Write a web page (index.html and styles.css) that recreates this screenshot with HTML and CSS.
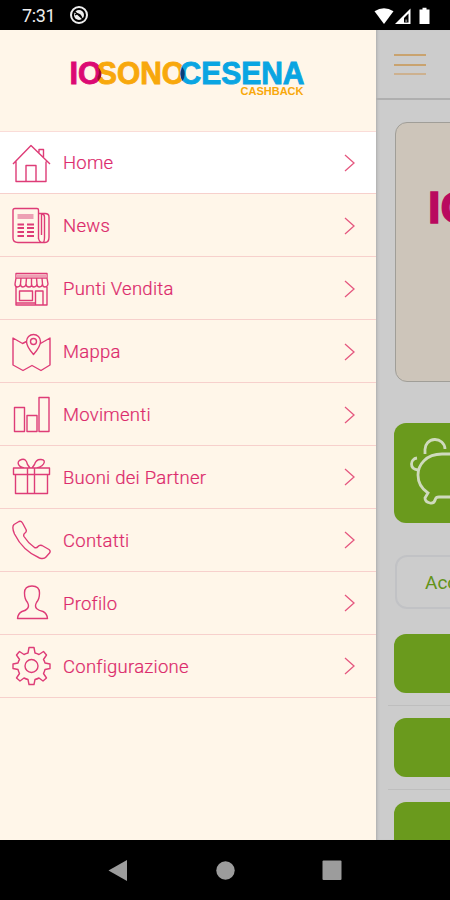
FILE: index.html
```
<!DOCTYPE html>
<html lang="it">
<head>
<meta charset="utf-8">
<title>IoSonoCesena Cashback</title>
<link rel="stylesheet" href="styles.css">
</head>
<body>
<div class="phone">
  <header class="status">
    <span class="time">7:31</span>
    <svg class="app-mark" width="20" height="20" viewBox="0 0 20 20"><circle cx="10" cy="10" r="8" fill="none" stroke="#eee" stroke-width="2"/><circle cx="10" cy="10" r="5" fill="#eee"/><path d="M6 10Q10 7 12.500 12M5 6L15 15" fill="none" stroke="#000" stroke-width="1.3"/></svg>
    <svg class="signals" width="58" height="18" viewBox="0 0 58 18"><path d="M.5 4.200Q10 -1.500 19.500 4.200L10 17Z" fill="#fff"/><path d="M21 17L36.500 1.500V17Z" fill="#fff"/><path d="M30 11L34.500 6.500V15.500H30Z" fill="#000"/><path d="M31.300 12.500H33.200V15.500H31.300Z" fill="#777"/><path d="M45.500 2.500H48.500V.8H52.500V2.500H55.500V17H45.500Z" fill="#fff"/></svg>
  </header>
  <div class="screen">
    <nav class="drawer">
      <div class="brand">
        <svg width="240" height="40" viewBox="0 0 240 40" class="logo">
          <text x="-.5" y="27" textLength="32.500" lengthAdjust="spacingAndGlyphs" fill="#dc0a73" stroke="#dc0a73">IO</text>
          <text x="27" y="27" textLength="88" lengthAdjust="spacingAndGlyphs" fill="#f8a80c" stroke="#f8a80c">SONO</text>
          <text x="109.500" y="27" textLength="125" lengthAdjust="spacingAndGlyphs" fill="#0aa5e2" stroke="#0aa5e2">CESENA</text>
          <path d="M112.500 10Q117 17 112.500 24Q108.500 17 112.500 10Z" fill="#0b3c78"/>
          <path d="M28 10Q32.500 14 31 20L28.500 24Q26.500 22 27.500 20Q30 17 28 10Z" fill="#9c0a34"/>
          <text class="sub" x="170.500" y="38" textLength="63" lengthAdjust="spacingAndGlyphs" fill="#f8a80c">CASHBACK</text>
        </svg>
      </div>
      <ul class="menu">
        <li class="item active"><svg class="icon" viewBox="0 0 40 40"><path d="M2 21L20 2.500L39 21M5 18.500V38.500H35V18.500M15 38.500V22.500H25V38.500M28 9.500V6.500H32.500V14"/></svg><span class="label">Home</span><svg class="arrow" viewBox="0 0 12 18"><path d="M1 1L10 9L1 17"/></svg></li>
        <li class="item"><svg class="icon" viewBox="0 0 40 40"><path d="M27.500 33V4Q27.500 2.500 26 2.500H4Q2 2.500 2 4.500V32Q2 36.500 7 36.500H34Q38 36.500 38 31V11Q38 7.500 34 7.500H27.500M27.500 32Q28 36.500 32 36.500Q33.500 36 33.500 31V11Q33.500 8 30.500 8V29"/><path class="bars" d="M6.500 10.500H22.500"/><path class="lines" d="M6.500 18.500H13M16 18.500H23M6.500 22H13M16 22H23M6.500 26H13M16 26H23M6.500 30H13M16 30H23"/></svg><span class="label">News</span><svg class="arrow" viewBox="0 0 12 18"><path d="M1 1L10 9L1 17"/></svg></li>
        <li class="item"><svg class="icon" viewBox="0 0 40 40"><path d="M5 18V36H36V18M5 4.500H36V9H5ZM5 9L4 15Q4 18 6.500 18T9.500 15Q9.500 18 12 18T15 15Q15 18 18 18T20.500 15Q20.500 18 23 18T26 15Q26 18 28.500 18T31.500 15Q31.500 18 34 18T37 15L36 9M10 9L9.500 15M15.500 9L15 15M20.500 9V15M25.500 9L26 15M31 9L31.500 15M8.500 22H21.500V31.500H8.500ZM24.500 36V22H32V36M5 34H24"/><path class="soft" d="M5 7H36"/></svg><span class="label">Punti Vendita</span><svg class="arrow" viewBox="0 0 12 18"><path d="M1 1L10 9L1 17"/></svg></li>
        <li class="item"><svg class="icon" viewBox="0 0 40 40"><path d="M15.500 9.500L11.500 11.500L2 6V33L12 38.500L21 33.500L30 38.500L39 33V6L29.500 11.500M22.500 22.500Q15.500 14.500 15.500 9.500A7 7 0 0 1 29.500 9.500Q29.500 14.500 22.500 22.500Z"/><circle cx="22.500" cy="9.500" r="3"/></svg><span class="label">Mappa</span><svg class="arrow" viewBox="0 0 12 18"><path d="M1 1L10 9L1 17"/></svg></li>
        <li class="item"><svg class="icon" viewBox="0 0 40 40"><path d="M3.500 12.500H13.500V36.500H3.500ZM16 20.500H26V36.500H16ZM28 2.500H38V36.500H28Z"/></svg><span class="label">Movimenti</span><svg class="arrow" viewBox="0 0 12 18"><path d="M1 1L10 9L1 17"/></svg></li>
        <li class="item"><svg class="icon" viewBox="0 0 40 40"><path d="M2.500 11H38.500V17.500H2.500ZM4.500 17.500V36.500H36.500V17.500M16.500 11V36.500M23.500 11V36.500M16.500 11Q9 11 7.500 7.500T10.500 2.500T16.500 7.500L19 11M22 11Q30 11 32.500 7T30 2.500T23.500 7.500L21 11"/></svg><span class="label">Buoni dei Partner</span><svg class="arrow" viewBox="0 0 12 18"><path d="M1 1L10 9L1 17"/></svg></li>
        <li class="item"><svg class="icon" viewBox="0 0 40 40"><path d="M3 4.500L8 1.500Q10 .5 11.500 3L15 9.500Q16 11.500 14 13Q12 14.500 13 16.500Q17 23 23.500 27.500Q25.500 28.500 27 26.500T31 25.500L38 29.500Q40 31 38.500 33L35 37Q33 39.500 28.500 38Q12 31 3.500 14Q.5 7 3 4.500Z"/></svg><span class="label">Contatti</span><svg class="arrow" viewBox="0 0 12 18"><path d="M1 1L10 9L1 17"/></svg></li>
        <li class="item"><svg class="icon" viewBox="0 0 40 40"><path d="M21 3Q28.500 3 28.500 10Q28.500 16 25.500 19.500Q23.500 23 25.500 25.500Q27.500 27.500 32 28.500Q36 30.500 36.500 35.500H6.500Q7 30.500 11 28.500Q15 27.500 16.500 25.500Q18.500 23 16.500 19.500Q13.500 16 13.500 10Q13.500 3 21 3Z"/></svg><span class="label">Profilo</span><svg class="arrow" viewBox="0 0 12 18"><path d="M1 1L10 9L1 17"/></svg></li>
        <li class="item"><svg class="icon" viewBox="0 0 40 40"><path d="M18 1.500H23L24 7Q26 7.500 28 8.500L32.500 5.500L35.500 9L32.500 13.500Q33.500 15 34 17L39 18V22.500L34 23.500Q33.500 25.500 32.500 27.500L35.500 32L32 35L28 32Q26 33 24 33.500L23 38.500H18L17 33.500Q15 33 13 32L9 35L5.500 32L8.500 27.500Q7.500 25.500 7 23.500L2 22.500V18L7 17Q7.500 15 8.500 13.500L5.500 9L8.500 5.500L13 8.500Q15 7.500 17 7Z"/><circle cx="20.500" cy="20" r="6.500"/></svg><span class="label">Configurazione</span><svg class="arrow" viewBox="0 0 12 18"><path d="M1 1L10 9L1 17"/></svg></li>
      </ul>
    </nav>
    <main class="page">
      <div class="topbar"><div class="burger"><i></i><i></i><i></i></div></div>
      <section class="card">IO</section>
      <section class="savings"><svg width="56" height="76" viewBox="0 0 56 76"><path d="M17 20V16A10 10 0 0 1 37 15M9 24C2 25 1 35 10 36M56 20H34C18 20 10 31 10 41C10 50 14 55 20 59L17 64Q17 68 22 69Q26 70 27.500 65Q28 63 31 63H56" fill="none" stroke="#cfdabd" stroke-width="2.800"/></svg></section>
      <div class="access">Accedi</div>
      <div class="action"></div><hr>
      <div class="action"></div><hr>
      <div class="action"></div>
    </main>
  </div>
  <footer class="navbar">
    <svg width="450" height="60" viewBox="0 0 450 60"><g fill="#9c9c9c"><path d="M108.500 30.500L127 20V41Z"/><circle cx="225.500" cy="30.500" r="9.200"/><rect x="322.500" y="20.500" width="19" height="19.500" rx="1"/></g></svg>
  </footer>
</div>
</body>
</html>
```
FILE: styles.css
```
* { box-sizing: border-box; }
body { margin: 0; font-family: Roboto, sans-serif; }
.phone { width: 450px; height: 900px; display: flex; flex-direction: column; overflow: hidden; background: #000; }
.status { height: 30px; display: flex; align-items: center; padding: 0 18px 0 22px; color: #eee; flex: none; }
.time { font-size: 18px; letter-spacing: -.4px; line-height: 30px; width: 33px; padding-top: 2px; }
.app-mark { margin-left: 14px; }
.signals { margin-left: auto; margin-top: 1px; }
.screen { height: 810px; display: flex; overflow: hidden; flex: none; }
.drawer { width: 376px; flex: none; background: #fff6e9; }
.brand { height: 101.5px; padding: 27px 0 0 70px; border-bottom: 1px solid #fadcd8; }
.logo { display: block; font: bold 30.5px "Liberation Sans", sans-serif; }
.logo text { stroke-width: .9px; }
.logo .sub { font-size: 10.5px; }
.menu { list-style: none; margin: 0; padding: 0; }
.item { height: 62.9px; display: flex; align-items: center; padding: 1px 20px 0 11px; border-bottom: 1px solid #f7d0cc; }
.active { background: #fff; }
.icon { width: 40px; height: 40px; flex: none; fill: none; stroke: #de3c77; stroke-width: 1.4; stroke-linejoin: round; }
.icon .bars { stroke: #eda0b4; stroke-width: 5; }
.icon .lines { stroke-width: 2; }
.icon .soft { stroke: #eda0b4; stroke-width: 3; }
.label { margin-left: 12px; font-size: 18.5px; letter-spacing: .25px; color: #dc2b6c; font-weight: 300; padding-top: 1px; -webkit-text-stroke: .2px #dc2b6c; }
.arrow { width: 12px; height: 18px; margin-left: auto; fill: none; stroke: #e5577f; stroke-width: 1.3; }
.page { width: 74px; background: #ccc; overflow: hidden; box-shadow: inset 3px 0 3px -2px #aaa; }
.topbar { height: 70px; border-bottom: 2px solid #afafaf; padding: 24px 0 0 18px; }
.burger { width: 32px; height: 21px; display: flex; flex-direction: column; justify-content: space-between; }
.burger i { height: 2px; background: #c9a36f; }
.burger i:last-child { background: #cdb18f; }
.card { width: 280px; height: 260px; margin: 22px 0 0 19px; border: 1.5px solid #a09e98; border-radius: 12px; background: #cdc5ba; padding: 60px 0 0 32px; color: #b9095f; font: bold 45px/50px "Liberation Sans", sans-serif; -webkit-text-stroke: 1.5px #b9095f; }
.savings { width: 280px; height: 100px; margin: 41px 0 0 18px; border-radius: 12px; background: #6a9a1d; padding: 11px 0 0 14px; }
.access { width: 280px; height: 54px; margin: 32px 0 0 19px; border: 2px solid #c1c2c5; border-radius: 12px; padding-left: 28px; color: #629318; font-size: 19px; line-height: 52px; }
.action { width: 280px; height: 59px; margin: 25px 0 0 18px; border-radius: 12px; background: #6a9a1d; }
hr { margin: 12px 0 0 12px; border: 0; height: 1px; background: #bebebe; }
hr + .action { margin-top: 12px; }
.navbar { height: 60px; flex: none; }
.navbar svg { display: block; }
```
